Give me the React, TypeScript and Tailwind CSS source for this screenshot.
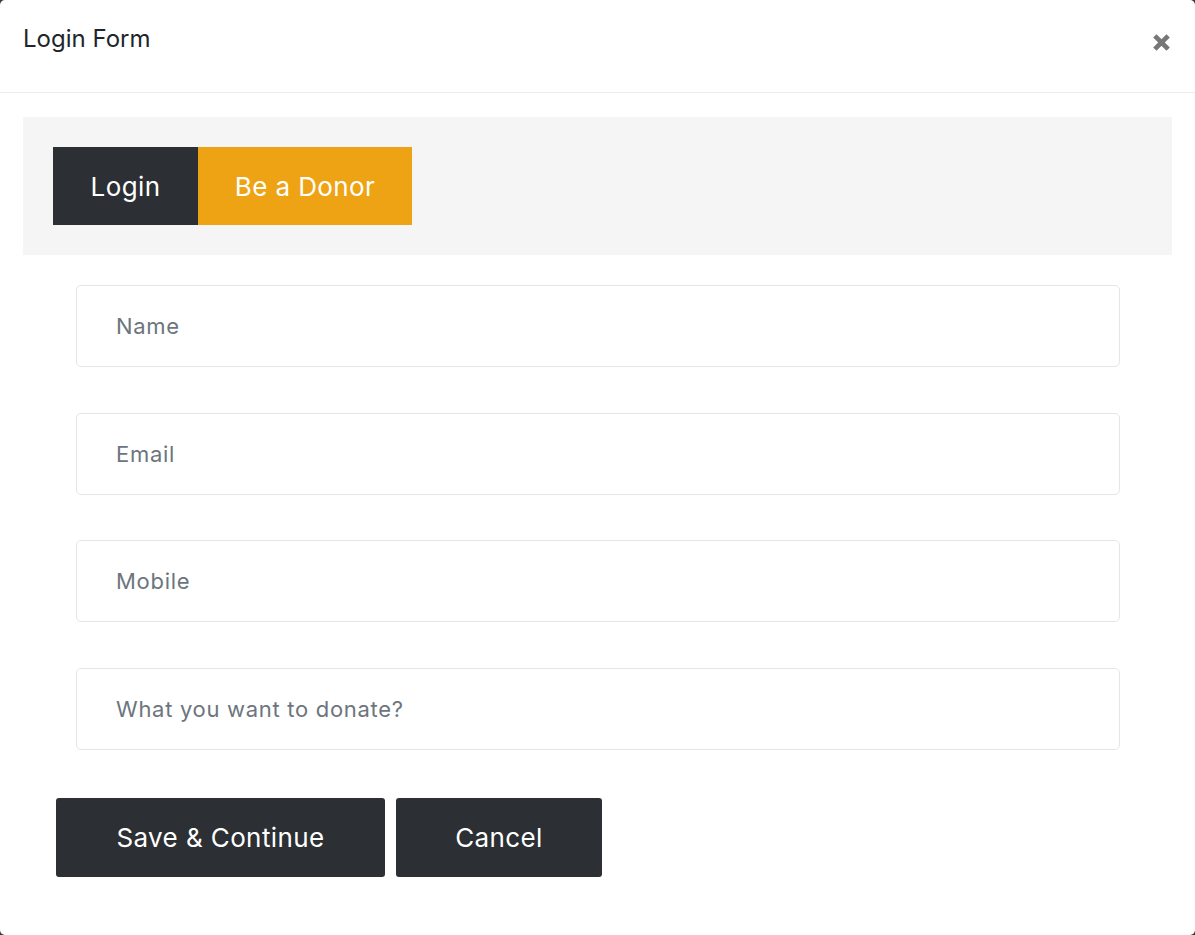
import React from "react";

export default function App() {
  const fields = ["Name", "Email", "Mobile", "What you want to donate?"];
  return (
    <div
      className="w-[1195px] h-[935px] bg-[#3a3a3a]"
      style={{ fontFamily: "Inter, 'Noto Sans', sans-serif" }}
    >
      <div className="w-full h-full bg-white rounded-[5px] flex flex-col">
        <div className="h-[93px] border-b border-[#e9ecef] flex items-start justify-between pl-[23px] pr-[24px]">
          <h1 className="text-[24px] text-[#212529] mt-[23px] leading-[32px]">Login Form</h1>
          <button className="mt-[33px] text-[#777] text-[24px] leading-none font-bold">
            <svg width="19" height="19" viewBox="0 0 20 20">
              <path d="M3 3 L17 17 M17 3 L3 17" stroke="#777" strokeWidth="5" strokeLinecap="butt" />
            </svg>
          </button>
        </div>
        <div className="mx-[23px] mt-[24px] h-[138px] bg-[#f5f5f5] pl-[30px] pt-[30px]">
          <div className="flex">
            <button className="h-[78px] w-[145px] bg-[#2c2f33] text-white text-[26px] tracking-[0.4px]">Login</button>
            <button className="h-[78px] w-[214px] bg-[#eea315] text-white text-[26px] tracking-[0.4px]">Be a Donor</button>
          </div>
        </div>
        <div className="flex flex-col gap-[45.67px] mt-[30px] ml-[76px] w-[1044px]">
          {fields.map((f) => (
            <input
              key={f}
              placeholder={f}
              className="h-[82px] border border-[#e6e6e6] rounded-[5px] pl-[39px] text-[22px] tracking-[0.7px] text-[#495057] placeholder:text-[#6c757d] outline-none"
            />
          ))}
        </div>
        <div className="flex gap-[11px] ml-[56px] mt-[48px]">
          <button className="h-[79px] w-[329px] bg-[#2c2f33] text-white text-[26px] tracking-[0.4px] rounded-[3px]">Save &amp; Continue</button>
          <button className="h-[79px] w-[206px] bg-[#2c2f33] text-white text-[26px] tracking-[0.4px] rounded-[3px]">Cancel</button>
        </div>
      </div>
    </div>
  );
}
